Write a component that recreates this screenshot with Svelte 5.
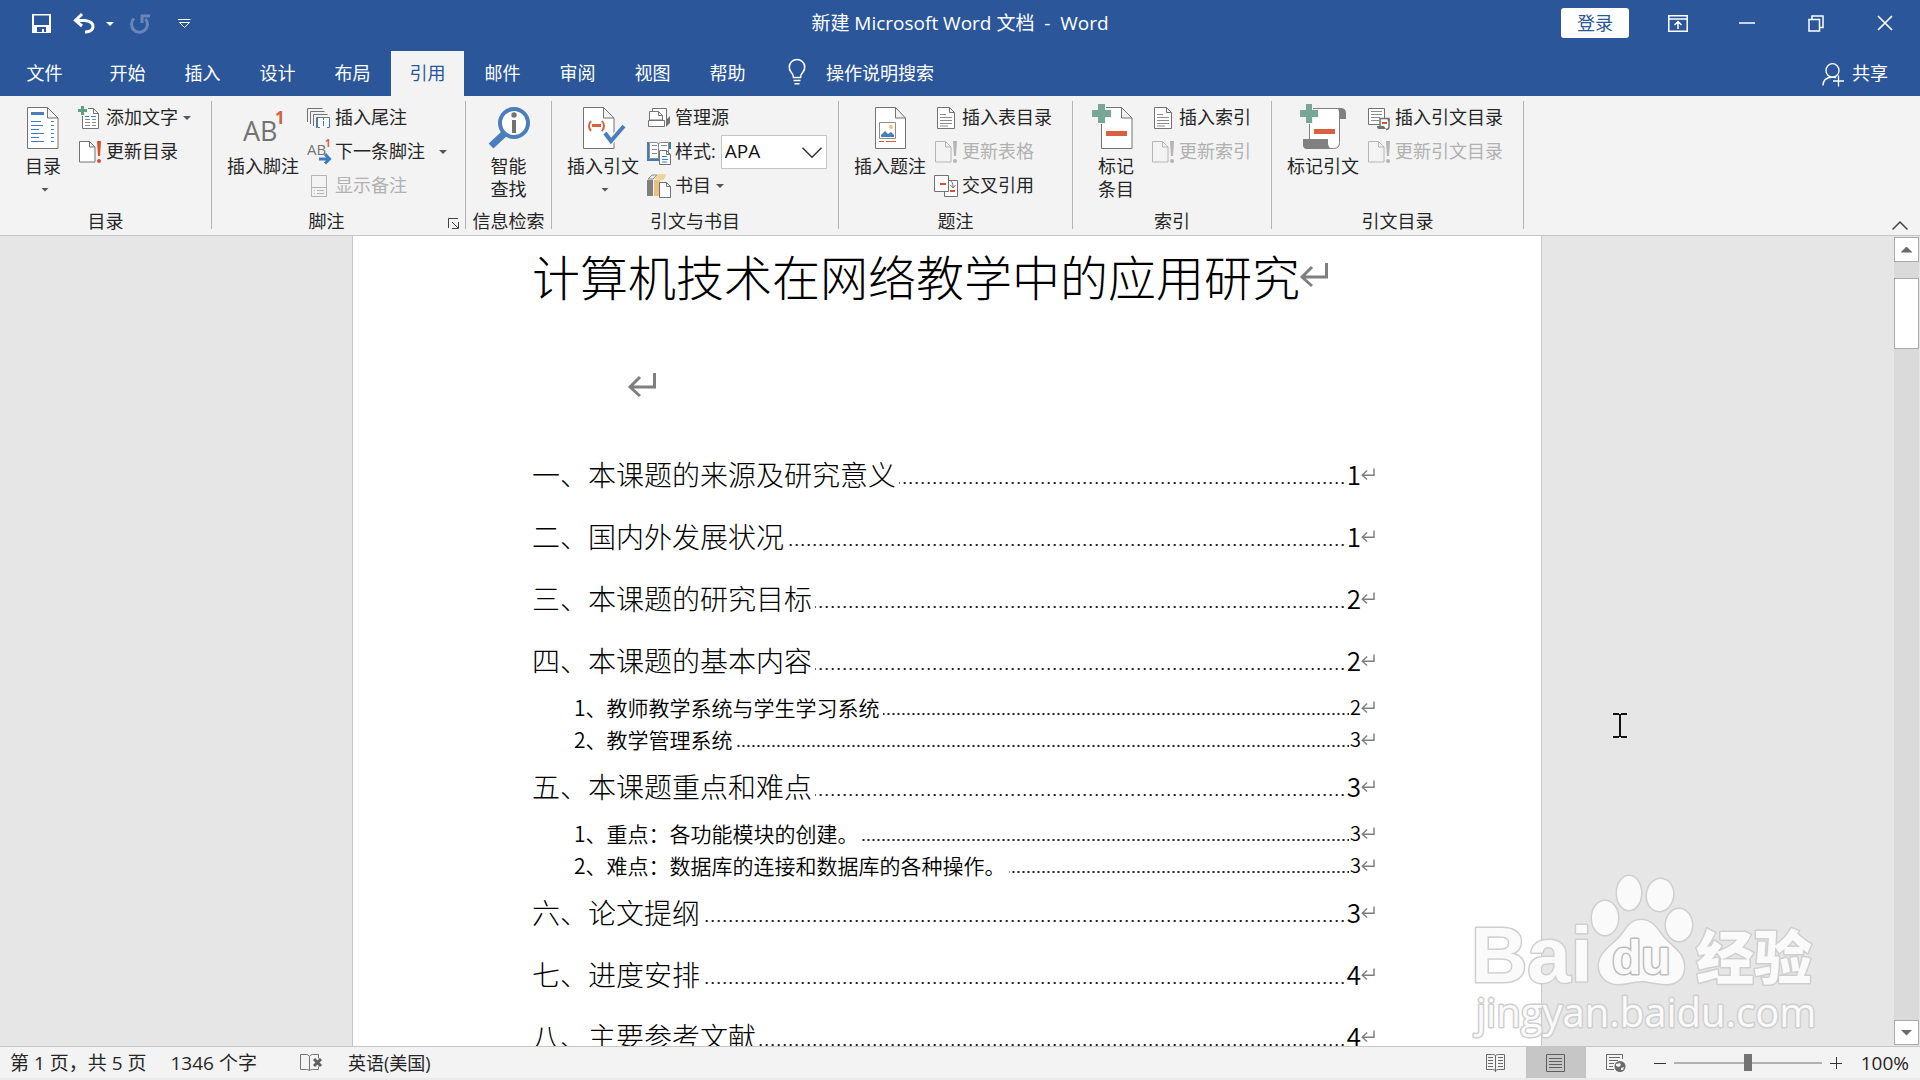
<script lang="ts">
  type Entry = { text: string; page: number; sub?: boolean };
  type Item = {
    icon: string;
    label: string;
    arrow?: boolean;
    far?: boolean;
    off?: boolean;
    select?: string[];
  };
  type Group = {
    label: string;
    size: string;
    big: { icon: string; lines: string[]; arrow?: boolean };
    items: Item[];
    launcher?: boolean;
  };

  const tabs = ["开始", "插入", "设计", "布局", "引用", "邮件", "审阅", "视图", "帮助"];
  let active = "引用";
  let zoom = 100;
  let style = "APA";

  const groups: Group[] = [
    {
      label: "目录",
      size: "toc-group",
      big: { icon: "toc", lines: ["目录"], arrow: true },
      items: [
        { icon: "add-text", label: "添加文字", arrow: true },
        { icon: "update", label: "更新目录" },
      ],
    },
    {
      label: "脚注",
      size: "note-group",
      big: { icon: "footnote", lines: ["插入脚注"] },
      items: [
        { icon: "endnote", label: "插入尾注" },
        { icon: "next-note", label: "下一条脚注", arrow: true, far: true },
        { icon: "show-notes", label: "显示备注", off: true },
      ],
      launcher: true,
    },
    {
      label: "信息检索",
      size: "lookup-group",
      big: { icon: "lookup", lines: ["智能", "查找"] },
      items: [],
    },
    {
      label: "引文与书目",
      size: "cite-group",
      big: { icon: "citation", lines: ["插入引文"], arrow: true },
      items: [
        { icon: "sources", label: "管理源" },
        { icon: "style", label: "样式:", select: ["APA", "Chicago", "MLA"] },
        { icon: "books", label: "书目", arrow: true },
      ],
    },
    {
      label: "题注",
      size: "caption-group",
      big: { icon: "caption", lines: ["插入题注"] },
      items: [
        { icon: "list", label: "插入表目录" },
        { icon: "update", label: "更新表格", off: true },
        { icon: "cross", label: "交叉引用" },
      ],
    },
    {
      label: "索引",
      size: "index-group",
      big: { icon: "mark-entry", lines: ["标记", "条目"] },
      items: [
        { icon: "list", label: "插入索引" },
        { icon: "update", label: "更新索引", off: true },
      ],
    },
    {
      label: "引文目录",
      size: "authority-group",
      big: { icon: "mark-cite", lines: ["标记引文"] },
      items: [
        { icon: "authorities", label: "插入引文目录" },
        { icon: "update", label: "更新引文目录", off: true },
      ],
    },
  ];

  const toc: Entry[] = [
    { text: "一、本课题的来源及研究意义", page: 1 },
    { text: "二、国内外发展状况", page: 1 },
    { text: "三、本课题的研究目标", page: 2 },
    { text: "四、本课题的基本内容", page: 2 },
    { text: "1、教师教学系统与学生学习系统", page: 2, sub: true },
    { text: "2、教学管理系统", page: 3, sub: true },
    { text: "五、本课题重点和难点", page: 3 },
    { text: "1、重点：各功能模块的创建。", page: 3, sub: true },
    { text: "2、难点：数据库的连接和数据库的各种操作。", page: 3, sub: true },
    { text: "六、论文提纲", page: 3 },
    { text: "七、进度安排", page: 4 },
    { text: "八、主要参考文献", page: 4 },
  ];
</script>

{#snippet bigIcon(name)}
  <svg class="big-icon" viewBox="0 0 46 46" aria-hidden="true">
    {#if name == "toc"}
      <path class="page" d="M7.5 3.5h20l10.5 10.500v30.500h-30.500z M27.500 3.500v10.500h10.500" />
      <path fill="#4a7ebb" d="M11 8h13v3H11z" />
      <path stroke="#4a7ebb" d="M11 17.500h10M11 21.500h12M11 25.500h8M11 29.500h13M11 33.500h8M11 37.500h13M31 17.500h3M31 21.500h3M31 25.500h3M31 29.500h3M31 33.500h3M31 37.500h3" />
    {:else if name == "footnote"}
      <text x="3" y="37" font-size="27" fill="#737373">AB</text>
      <text x="35" y="20" font-size="17" font-weight="700" fill="#d9603f">1</text>
    {:else if name == "lookup"}
      <path stroke="#4a7fbb" stroke-width="7" d="M19 29L5 42" />
      <circle cx="28" cy="19" r="14" fill="#fff" stroke="#4a7fbb" stroke-width="4" />
      <circle cx="28" cy="11" r="2.700" fill="#737373" />
      <path fill="#737373" d="M26 16h4v13h-4z" />
    {:else if name == "citation"}
      <path class="page" d="M3.500 3.500h20l10.500 10.500v30.500h-30.500z M23.500 3.500v10.500h10.500" />
      <path stroke="#d9603f" stroke-width="2" fill="none" d="M11 17q-4 5 0 10M22 17q4 5 0 10" />
      <path fill="#d9603f" d="M12 20h9v3h-9z" />
      <path stroke="#f3f3f3" stroke-width="7" fill="none" d="M25 29l6 8l13-15" />
      <path stroke="#4a7fbb" stroke-width="4" fill="none" d="M25 29l6 8l13-15" />
    {:else if name == "caption"}
      <path class="page" d="M8.500 3.500h20l10 10.500v30.500h-30z M28.500 3.500v10.500h10" />
      <path stroke="#8c8c8c" fill="#fff" d="M12.500 18.500h16v16h-16z" />
      <circle cx="24" cy="23" r="2" fill="#eec578" />
      <path fill="#4a7ebb" d="M14 33v-2l4-4l3 3l3-2l3 3v2z" />
      <path stroke="#d9603f" d="M12 37.500h5M19 37.500h10" />
    {:else if name == "mark-entry"}
      <path class="page" d="M8.500 3.500h20l10.500 10.500v30.500h-30.500z M28.500 3.500v10.500h10.500" />
      <path fill="#d9603f" d="M13 27h21v5H13z" />
      <path fill="#78a796" stroke="#f3f3f3" stroke-width="2" paint-order="stroke" d="M5 0h7v6h6v7h-6v6H5v-6H-1V6h6z" />
    {:else if name == "mark-cite"}
      <path fill="#fff" stroke="#808080" d="M9.500 4.500h30v34q0 6-6 6h-24z" />
      <path fill="#808080" d="M36 4h6q4 1 4 5v6h-7V7q0-2-3-3z" />
      <path fill="#808080" d="M3 35h25v5q1 5 5 5H7q-4 0-4-4z" />
      <path fill="#d9603f" d="M14 25h21v5H14z" />
      <path fill="#78a796" stroke="#f3f3f3" stroke-width="2" paint-order="stroke" d="M6 0h6v6h6v7h-6v6H6v-6H0V6h6z" />
    {/if}
  </svg>
{/snippet}

{#snippet smallIcon(name)}
  <svg class="small-icon" viewBox="0 0 24 24" aria-hidden="true">
    {#if name == "add-text"}
      <path class="page" d="M4.500 2.500h11l5 5v15h-16z M15.500 2.500v5h5" />
      <path stroke="#8c8c8c" d="M7 10.500h4M7 13.500h5M14 13.500h4M7 16.500h5M14 16.500h4M7 19.500h5M14 19.500h4" />
      <path stroke="#4a7ebb" d="M7 10.500h4M13 10.500h5" />
      <path fill="#5fa184" stroke="#f3f3f3" paint-order="stroke" stroke-width="2" d="M3 0h3v3h3v3H6v3H3V6H0V3h3z" />
    {:else if name == "update"}
      <path class="page" d="M1.500 1.500h10l5.500 5.500v15h-15.500z M11.500 1.500v5.500h5.500" />
      <path class="bang" d="M19 1h4l-1 15h-2z" />
      <circle class="bang" cx="21" cy="21" r="2" />
    {:else if name == "endnote"}
      <path fill="none" stroke="#737373" d="M.500 16V2.500h15M3.500 18V5.500h14M6.500 20V8.500h14" />
      <path fill="#fff" d="M9 11h13v11H9z" />
      <path fill="none" stroke="#737373" d="M9.500 22V11.500h12" />
      <path fill="none" stroke="#3f7cbf" d="M13 11.500h-2.500v10H13M20 11.500h2.500v10H20M16.500 15v5M16.500 12v2" />
    {:else if name == "next-note"}
      <text x="0" y="15" font-size="15" fill="#737373">AB</text>
      <text x="18" y="7" font-size="10" font-weight="700" fill="#d9603f">1</text>
      <path stroke="#3f7cbf" stroke-width="3" fill="none" d="M12 19h10M18 14l4.500 5l-4.500 4.500" />
    {:else if name == "show-notes"}
      <path fill="none" stroke="#b5b5b5" d="M4.500 1.500h15v21h-15zM4.500 13.500h15M7 16.500h1M10 16.500h7M7 19.500h1M10 19.500h7" />
    {:else if name == "sources"}
      <path fill="#fff" stroke="#737373" d="M5.500 6V2.500h14V15" />
      <path fill="#fff" stroke="#737373" d="M2.500 14V5.500h9l4 4V14z M11.500 5.500v4h4M1.500 14.500h16v6h-16z" />
      <path fill="#737373" d="M19 14l4-4v7l-4 4z" />
    {:else if name == "style"}
      <path fill="#fff" stroke="#8c8c8c" d="M2.500 2.500h7q2 0 2 2q0-2 2-2h8v16h-19z" />
      <path stroke="#3f7cbf" stroke-width="2" fill="none" d="M1 2v18h11M23 2v7" />
      <path stroke="#8c8c8c" d="M5 5.500h5M5 9.500h5M5 13.500h5M14 5.500h6M11.500 4v15" />
      <path class="page" d="M12.500 10.500h7l4 4v10h-11z M19.500 10.500v4h4" />
      <path stroke="#3f7cbf" d="M15 16.500h5M15 19.500h6M15 22h5" />
    {:else if name == "books"}
      <path fill="#808080" d="M0 6h6v16H0z" />
      <path fill="#ebc07b" d="M7 6h6v16H7z" />
      <path fill="#e8e8e8" stroke="#8c8c8c" d="M1 5l4-4h5L6 5z" />
      <path fill="#f1d49d" d="M7 5l4-5h8l-2 6h-4z" />
      <path class="page" d="M12.500 8.500h7l4 4v11h-11z M19.500 8.500v4h4" />
    {:else if name == "list"}
      <path class="page" d="M3.500 1.500h12l5 5v16h-17z M15.500 1.500v5h5" />
      <path stroke="#8c8c8c" d="M6 8.500h6M6 11.500h12M6 14.500h12M6 17.500h12M6 20h8" />
    {:else if name == "cross"}
      <path class="page" d="M10.500 6.500h13v16h-13z" />
      <path class="page" d="M.500 1.500h14v16h-14z" />
      <path fill="#d9502e" d="M6 9h6v2H6zM16 16h5v2h-5z" />
      <path fill="none" stroke="#737373" d="M16 6.500q3 1 3 7M16.500 11l2.500 3l2.500-3" />
    {:else if name == "authorities"}
      <path class="page" d="M1.500 2.500h16v16h-16z" />
      <path stroke="#8c8c8c" d="M4 5.500h11M4 8.500h11M4 11.500h9M4 14.500h8" />
      <path fill="#fff" stroke="#737373" stroke-width="1.500" d="M13 21V12.500h9v8q0 3-3 3" />
      <path fill="#737373" d="M10 20h7l2 3h-7q-2 0-2-3zM20 12q3 0 3 3h-2z" />
      <path fill="#d9502e" d="M15 16h5v2h-5z" />
    {/if}
  </svg>
{/snippet}

{#snippet returnMark(small)}
  <svg class="return" class:small viewBox="0 0 28 25" aria-hidden="true">
    <path d="M26.500 1v14H3M12 5L2 15l10 9" />
  </svg>
{/snippet}

<div class="word">
  <header>
    <div class="titlebar">
      <div class="quick">
        <button aria-label="保存">
          <svg width="20" height="20" viewBox="0 0 20 20"><path fill="#fff" fill-rule="evenodd" d="M0 0h19v19H0zM2 1.500h15v9.500H15.500H2zM5 13h9v5h-2v-3h-2v3H5z" /></svg>
        </button>
        <button class="undo" aria-label="撤消">
          <svg width="22" height="20" viewBox="0 0 22 20"><path fill="none" stroke="#fff" stroke-width="3" d="M2 6.500h10q8 1 8 6t-7 5.500h-1M9 0L2.500 6.500L9 12" /></svg>
        </button>
        <button class="undo-menu" aria-label="撤消列表"><span class="caret"></span></button>
        <button class="redo" aria-label="重复">
          <svg width="20" height="20" viewBox="0 0 20 20"><path fill="none" stroke="#6886bb" stroke-width="3" d="M4 4.500A8 8 0 1 0 15.500 5M12 9V2h8" /></svg>
        </button>
        <button class="customize" aria-label="自定义快速访问工具栏">
          <svg width="13" height="10" viewBox="0 0 13 10"><path fill="none" stroke="#fff" d="M0 .500h12.500M1.500 3.500l5 5l5-5z" /></svg>
        </button>
      </div>
      <div class="title">新建 Microsoft Word 文档  -  Word</div>
      <div class="window">
        <button class="login">登录</button>
        <button class="win" aria-label="功能区显示选项">
          <svg width="20" height="17" viewBox="0 0 20 17"><path fill="none" stroke="#fff" stroke-width="1.500" d="M.800 .800h18.400v15.400H.800zM1 4h18M10 14V7M6.500 10L10 6.500l3.500 3.500" /></svg>
        </button>
        <button class="win" aria-label="最小化">
          <svg width="16" height="16" viewBox="0 0 16 16"><path stroke="#fff" stroke-width="1.500" d="M0 8h16" /></svg>
        </button>
        <button class="win" aria-label="向下还原">
          <svg width="16" height="17" viewBox="0 0 16 17"><path fill="none" stroke="#fff" stroke-width="1.500" d="M1 4.500h10.500V16H1zM4 4.500V1h11v11.500h-3" /></svg>
        </button>
        <button class="win" aria-label="关闭">
          <svg width="16" height="16" viewBox="0 0 16 16"><path stroke="#fff" stroke-width="1.700" d="M1 1l14 14M15 1L1 15" /></svg>
        </button>
      </div>
    </div>

    <nav class="tabs">
      <button class="file">文件</button>
      {#each tabs as tab}
        <button class="tab" class:active={tab == active} on:click={() => (active = tab)}>{tab}</button>
      {/each}
      <button class="tell">
        <svg width="18" height="25" viewBox="0 0 18 25"><path fill="none" stroke="#fff" stroke-width="1.600" d="M5.500 17.500q0-3-2.500-5.500a7.700 7.700 0 1 1 12 0q-2.500 2.500-2.500 5.500zM5.500 20.500h7M6.500 23.800h5" /></svg>
        操作说明搜索
      </button>
      <button class="share">
        <svg width="23" height="24" viewBox="0 0 23 24"><path fill="none" stroke="#fff" stroke-width="1.300" d="M1 24.500q0-8 9.500-8.500M10.500 16q2 0 3.500 1M16.500 14.500v11M11 20h11" /><ellipse cx="10.500" cy="9.500" rx="6.500" ry="6.800" fill="none" stroke="#fff" stroke-width="1.300" /></svg>
        共享
      </button>
    </nav>
  </header>

  <section class="ribbon">
    {#each groups as group}
      <div class="group {group.size}">
        <div class="body">
          <button class="big">
            {@render bigIcon(group.big.icon)}
            {#each group.big.lines as line}
              <span>{line}</span>
            {/each}
            {#if group.big.arrow}
              <span class="caret-line"><i class="caret"></i></span>
            {/if}
          </button>
          {#if group.items.length}
            <div class="items">
              {#each group.items as item}
                {#if item.select}
                  <div class="item">
                    {@render smallIcon(item.icon)}
                    <label for="cite-style">{item.label}</label>
                    <span class="combo">
                      <select id="cite-style" bind:value={style}>
                        {#each item.select as option}
                          <option>{option}</option>
                        {/each}
                      </select>
                      <svg width="20" height="12" viewBox="0 0 20 12"><path fill="none" stroke="#333" stroke-width="1.500" d="M.500 .800l9.500 9.500l9.500-9.500" /></svg>
                    </span>
                  </div>
                {:else}
                  <button class="item" disabled={item.off}>
                    {@render smallIcon(item.icon)}
                    <span>{item.label}</span>
                    {#if item.arrow}
                      <i class="caret" class:far={item.far}></i>
                    {/if}
                  </button>
                {/if}
              {/each}
            </div>
          {/if}
        </div>
        <div class="group-label">
          <span>{group.label}</span>
          {#if group.launcher}
            <button class="launcher" aria-label="脚注和尾注">
              <svg width="12" height="12" viewBox="0 0 12 12"><path fill="none" stroke="#444" d="M.500 10V.500H10M4 4l6 6M10.500 4v6.500H4" /></svg>
            </button>
          {/if}
        </div>
      </div>
    {/each}
    <button class="collapse" aria-label="折叠功能区">
      <svg width="16" height="9" viewBox="0 0 16 9"><path fill="none" stroke="#444" stroke-width="1.500" d="M.500 8.500L8 1l7.500 7.500" /></svg>
    </button>
  </section>

  <main>
    <div class="canvas">
      <article>
        <h1>计算机技术在网络教学中的应用研究{@render returnMark(false)}</h1>
        <p class="blank">{@render returnMark(false)}</p>
        {#each toc as entry}
          <div class="entry" class:sub={entry.sub}>
            <span>{entry.text}</span>
            <span class="leader"></span>
            <span class="num">{entry.page}</span>
            {@render returnMark(true)}
          </div>
        {/each}
      </article>
    </div>
    <div class="scrollbar">
      <button aria-label="向上滚动"><i class="caret up"></i></button>
      <div class="thumb"></div>
      <button aria-label="向下滚动"><i class="caret"></i></button>
    </div>

    <svg class="ibeam" width="14" height="26" viewBox="0 0 14 26" aria-hidden="true">
      <path fill="none" stroke="#111" stroke-width="2" d="M0 1h6M8 1h6M0 24h6M8 24h6M7 1v23" />
    </svg>

    <svg class="watermark" width="360" height="176" viewBox="0 0 360 176" aria-hidden="true">
      <g class="mark">
        <text x="1" y="114" font-size="78" class="logo">Bai</text>
        <ellipse cx="135" cy="50" rx="13" ry="17" />
        <ellipse cx="159" cy="25" rx="12" ry="17" />
        <ellipse cx="190" cy="27" rx="13" ry="16" transform="rotate(8 190 27)" />
        <ellipse cx="209" cy="57" rx="13" ry="16" />
        <path d="M171 52C182 52 187 61 193 69C201 79 214 84 214 99C214 112 204 117 194 116C183 115 178 113 171 113C164 113 156 116 148 116C137 116 129 108 129 98C129 85 142 78 150 69C157 61 160 52 171 52Z" />
        <text x="142" y="106" font-size="48" class="du">du</text>
        <text x="226" y="111" font-size="58" class="cjk">经验</text>
        <text x="6" y="159" font-size="40" class="url">jingyan.baidu.com</text>
      </g>
    </svg>
  </main>

  <footer>
    <span>第 1 页，共 5 页</span>
    <span class="count">1346 个字</span>
    <button class="proof" aria-label="校对">
      <svg width="22" height="20" viewBox="0 0 22 20"><path fill="none" stroke="#737373" d="M9.500 17.500V3.500q-1-2-3-2h-6v15h6q2 0 3 1q1-1 3-1h6v-3M9.500 3.500q1-2 3-2h6v4" /><path stroke="#5e5e5e" stroke-width="3" d="M14 6l7 7M21 6l-7 7" /></svg>
    </button>
    <span class="lang">英语(美国)</span>
    <div class="views">
      <button aria-label="阅读视图">
        <svg width="20" height="20" viewBox="0 0 20 20"><path fill="none" stroke="#6a6a6a" d="M9.500 19V2.500q-1-1-3-1h-6v15h6q2 0 3 1.500q1-1.500 3-1.500h6v-15h-6q-2 0-3 1M2 4.500h5M2 7.500h5M2 10.500h5M2 13.500h5M12 4.500h5M12 7.500h5M12 10.500h5M12 13.500h5" /></svg>
      </button>
      <button class="on" aria-label="页面视图">
        <svg width="20" height="20" viewBox="0 0 20 20"><path fill="none" stroke="#5e5e5e" d="M.500 1.500h18v17H.500zM3 5.500h13M3 8.500h13M3 11.500h13M3 14.500h13" /></svg>
      </button>
      <button aria-label="Web 版式视图">
        <svg width="20" height="20" viewBox="0 0 20 20"><path fill="none" stroke="#6a6a6a" d="M8 16.500H.500v-15h16V6M3 4.500h11M3 7.500h9M3 10.500h5M3 13.500h4" /><circle cx="14" cy="13.500" r="5.500" fill="#6a6a6a" /><path fill="#f3f3f3" d="M10 11l4-1l1 2l-2 2l-3-1zM15 15l3-1l-1 3h-2z" /></svg>
      </button>
    </div>
    <button class="step" aria-label="缩小"><svg width="12" height="12" viewBox="0 0 12 12"><path stroke="#333" d="M0 6.500h12" /></svg></button>
    <input type="range" min="0" max="200" bind:value={zoom} aria-label="缩放" />
    <button class="step" aria-label="放大"><svg width="12" height="12" viewBox="0 0 12 12"><path stroke="#333" d="M0 6.500h12M6.500 0v12" /></svg></button>
    <span class="percent">{zoom}%</span>
  </footer>
</div>

<style>
  :global(body) {
    margin: 0;
  }
  .word {
    height: 100vh;
    display: flex;
    flex-direction: column;
    overflow: hidden;
    font-family: "Open Sans", "Noto Sans CJK SC", sans-serif;
    font-size: 18px;
    line-height: 24px;
    color: #262626;
    background: #f3f3f3;
  }
  button {
    font: inherit;
    color: inherit;
    background: none;
    border: 0;
    padding: 0;
    white-space: nowrap;
  }
  svg {
    display: block;
    flex: none;
    overflow: visible;
  }
  header {
    background: #2b579a;
    color: #fff;
  }
  .titlebar {
    height: 48px;
    display: grid;
    grid-template-columns: 1fr auto 1fr;
    align-items: center;
  }
  .title {
    padding-bottom: 2px;
    font-size: 19px;
    white-space: pre;
  }
  .quick {
    display: flex;
    align-items: center;
    padding-left: 32px;
  }
  .undo {
    margin-left: 21px;
  }
  .undo-menu {
    margin-left: 11px;
  }
  .redo {
    margin-left: 16px;
  }
  .customize {
    margin-left: 28px;
  }
  .caret {
    display: block;
    flex: none;
    width: 8px;
    height: 4px;
    background: currentColor;
    clip-path: polygon(0 0, 100% 0, 50% 100%);
  }
  .caret.up {
    clip-path: polygon(0 100%, 100% 100%, 50% 0);
  }
  .window {
    display: flex;
    align-items: center;
    justify-content: flex-end;
    padding: 0 1px 2px 0;
  }
  .login {
    width: 68px;
    height: 30px;
    margin-right: 14px;
    border-radius: 3px;
    background: #fff;
    color: #2b579a;
  }
  .win {
    width: 69px;
    height: 46px;
    display: flex;
    align-items: center;
    justify-content: center;
  }
  .tabs {
    height: 45px;
    padding-top: 3px;
    display: flex;
    gap: 2px;
  }
  .tabs button {
    padding-bottom: 2px;
  }
  .file {
    width: 89px;
  }
  .tab {
    width: 73px;
  }
  .tab.active {
    background: #f3f3f3;
    color: #2b579a;
  }
  .tell,
  .share {
    display: flex;
    align-items: center;
    gap: 20px;
    margin-left: 22px;
  }
  .share {
    gap: 7px;
    margin-left: auto;
    margin-right: 32px;
  }
  .ribbon {
    height: 139px;
    display: flex;
    border-bottom: 1px solid #c6c6c6;
    flex: none;
  }
  .group {
    box-sizing: border-box;
    margin: 5px 0 6px;
    border-right: 1px solid #b4b4b4;
    display: flex;
    flex-direction: column;
  }
  .toc-group {
    width: 212px;
  }
  .note-group {
    width: 254px;
  }
  .lookup-group {
    width: 86px;
  }
  .cite-group {
    width: 287px;
  }
  .caption-group {
    width: 234px;
  }
  .index-group {
    width: 199px;
  }
  .authority-group {
    width: 252px;
  }
  .body {
    height: 107px;
    display: flex;
    gap: 1px;
    padding-left: 8px;
  }
  .toc-group .body,
  .index-group .body {
    gap: 10px;
    padding-left: 18px;
  }
  .lookup-group .body {
    justify-content: center;
    padding: 0;
  }
  .big {
    display: flex;
    flex-direction: column;
    align-items: center;
    padding: 3px 7px 0;
    line-height: 23px;
  }
  .big-icon {
    width: 46px;
    height: 46px;
    margin: 0 -5px 5px;
  }
  .small-icon {
    width: 24px;
    height: 24px;
  }
  .page {
    fill: #fff;
    stroke: #737373;
  }
  .bang {
    fill: #d9502e;
  }
  .caret-line {
    height: 23px;
    padding-left: 4px;
    display: flex;
    align-items: center;
    color: #555;
  }
  .items {
    display: flex;
    flex-direction: column;
    align-items: flex-start;
  }
  .item {
    height: 34px;
    display: flex;
    align-items: center;
    gap: 4px;
  }
  .item span,
  .item label {
    padding-bottom: 2px;
  }
  .item .caret {
    margin-left: 1px;
    color: #555;
  }
  .item .caret.far {
    margin-left: 10px;
  }
  .item:disabled {
    color: #b1b1b1;
  }
  .item:disabled .page {
    fill: #f3f3f3;
    stroke: #b5b5b5;
  }
  .item:disabled .bang {
    fill: #b5b5b5;
  }
  .item .combo {
    position: relative;
    margin-left: 1px;
    padding: 0;
  }
  .combo svg {
    position: absolute;
    right: 5px;
    top: 12px;
    pointer-events: none;
  }
  select {
    display: block;
    appearance: none;
    box-sizing: border-box;
    width: 106px;
    height: 34px;
    padding: 0 3px 2px;
    border: 1px solid #c6c6c6;
    border-radius: 0;
    background: #fff;
    color: #111;
    font: inherit;
    font-size: 19px;
  }
  .group-label {
    height: 21px;
    line-height: 26px;
    display: flex;
  }
  .group-label span {
    flex: 1;
    text-align: center;
    white-space: nowrap;
  }
  .launcher {
    width: 24px;
    height: 26px;
    padding-top: 6px;
    padding-left: 7px;
  }
  .collapse {
    margin-left: auto;
    margin-right: 12px;
    align-self: flex-end;
    padding-bottom: 5px;
  }

  main {
    flex: 1;
    min-height: 0;
    position: relative;
    display: flex;
    background: #e6e6e6;
  }
  .canvas {
    flex: 1;
    display: flex;
    justify-content: center;
    overflow: hidden;
  }
  article {
    box-sizing: border-box;
    width: 62%;
    min-width: 1190px;
    padding: 0 166px 0 179px;
    border: solid #c6c6c6;
    border-width: 0 1px;
    background: #fff;
    color: #000;
    font-family: "Noto Sans CJK SC", sans-serif;
    font-weight: 300;
  }
  h1 {
    margin: 0;
    height: 77px;
    display: flex;
    align-items: center;
    font-size: 48px;
    font-weight: 300;
    white-space: nowrap;
  }
  .blank {
    box-sizing: border-box;
    margin: 0;
    height: 130px;
    display: flex;
    align-items: center;
    padding: 12px 0 0 96px;
  }
  .return {
    width: 28px;
    height: 25px;
    fill: none;
    stroke: #7f7f7f;
    stroke-width: 3px;
  }
  .return.small {
    width: 14px;
    height: 12px;
  }
  .entry {
    height: 62px;
    display: flex;
    align-items: center;
    font-size: 28px;
    white-space: nowrap;
  }
  .entry.sub {
    height: 32px;
    padding-left: 42px;
    font-size: 21px;
    font-weight: 350;
  }
  .leader {
    flex: 1;
    height: 20px;
    margin: 0 3px 0 3px;
    background: linear-gradient(90deg, transparent 4px, #222 4px) right bottom / 6px 2px repeat-x;
  }
  .sub .leader {
    height: 16px;
    margin-right: 1px;
    background: linear-gradient(90deg, transparent 3px, #222 3px) right bottom / 5px 2px repeat-x;
  }
  .num {
    font-weight: 350;
    font-size: 26px;
  }
  .sub .num {
    font-size: 20px;
  }

  .scrollbar {
    width: 25px;
    margin: 1px 1px 1px 0;
    display: flex;
    flex-direction: column;
    background: #dadada;
  }
  .scrollbar button {
    height: 25px;
    flex: none;
    display: flex;
    align-items: center;
    justify-content: center;
    border: 1px solid #ababab;
    background: #fff;
    color: #6a6a6a;
  }
  .scrollbar .caret {
    width: 12px;
    height: 6px;
  }
  .scrollbar button:last-child {
    margin-top: auto;
  }
  .thumb {
    height: 69px;
    margin-top: 16px;
    border: 1px solid #ababab;
    background: #fff;
  }
  .ibeam {
    position: absolute;
    top: 477px;
    right: 293px;
  }
  .watermark {
    position: absolute;
    right: 90px;
    bottom: 2px;
    pointer-events: none;
  }
  .mark {
    fill: #fafafa;
    stroke: #cfcfcf;
    stroke-width: 3px;
    stroke-linejoin: round;
    paint-order: stroke;
  }
  .logo {
    font-family: "Liberation Sans", sans-serif;
    font-weight: 700;
  }
  .du {
    font-family: "Liberation Sans", sans-serif;
    font-weight: 700;
    stroke: #bdbdbd;
  }
  .cjk {
    font-family: "Noto Sans CJK SC", sans-serif;
    font-weight: 900;
  }
  .url {
    font-family: "Open Sans", sans-serif;
  }

  footer {
    height: 31px;
    flex: none;
    display: flex;
    align-items: center;
    padding-left: 10px;
    padding-right: 11px;
    border-top: 1px solid #c6c6c6;
    border-bottom: 2px solid #ebebeb;
    font-size: 19px;
    white-space: nowrap;
  }
  .count {
    margin-left: 24px;
  }
  .proof {
    margin: 0 26px 0 43px;
  }
  .lang {
    font-size: 18px;
  }
  .views {
    margin-left: auto;
    display: flex;
    align-self: stretch;
  }
  .views button {
    width: 60px;
    display: flex;
    align-items: center;
    justify-content: center;
  }
  .views .on {
    background: #c6c6c6;
  }
  .step {
    margin: 0 8px;
  }
  input[type="range"] {
    appearance: none;
    width: 148px;
    height: 17px;
    margin: 0;
    background: linear-gradient(#b1b1b1, #b1b1b1) center / 100% 2px no-repeat;
  }
  input[type="range"]::-webkit-slider-thumb {
    appearance: none;
    width: 8px;
    height: 17px;
    background: #737373;
  }
  .percent {
    margin-left: 11px;
  }
</style>
